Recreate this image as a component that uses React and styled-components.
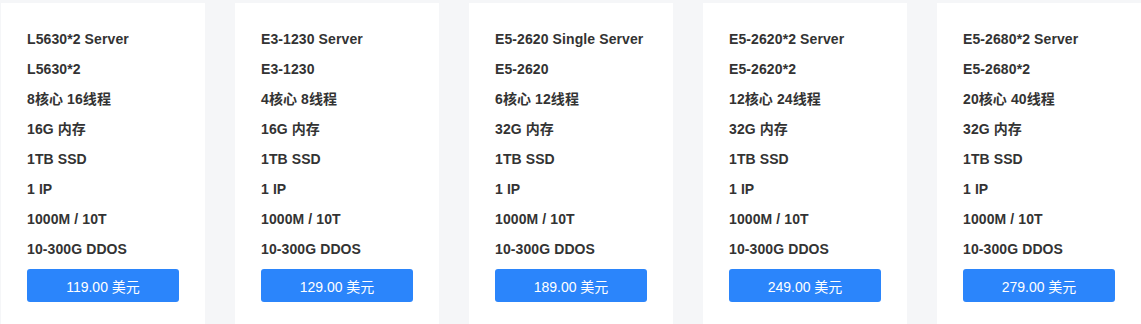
import styled, { createGlobalStyle } from "styled-components";

const GlobalStyle = createGlobalStyle`
    html, body {
        margin: 0;
        padding: 0;
        background: #f5f6f8;
        font-family: "Liberation Sans", Arial, "Noto Sans CJK SC", sans-serif;
    }
`

const plans = [
    { title: "L5630*2 Server", cpu: "L5630*2", cores: "8核心 16线程", ram: "16G 内存", price: "119.00" },
    { title: "E3-1230 Server", cpu: "E3-1230", cores: "4核心 8线程", ram: "16G 内存", price: "129.00" },
    { title: "E5-2620 Single Server", cpu: "E5-2620", cores: "6核心 12线程", ram: "32G 内存", price: "189.00" },
    { title: "E5-2620*2 Server", cpu: "E5-2620*2", cores: "12核心 24线程", ram: "32G 内存", price: "249.00" },
    { title: "E5-2680*2 Server", cpu: "E5-2680*2", cores: "20核心 40线程", ram: "32G 内存", price: "279.00" },
]

const App = () => {
    return (
        <>
            <GlobalStyle />
            <Wrapper>
                {plans.map((p) => (
                    <Card key={p.title}>
                        <Spec>{p.title}</Spec>
                        <Spec>{p.cpu}</Spec>
                        <Spec>{p.cores}</Spec>
                        <Spec>{p.ram}</Spec>
                        <Spec>1TB SSD</Spec>
                        <Spec>1 IP</Spec>
                        <Spec>1000M / 10T</Spec>
                        <Spec>10-300G DDOS</Spec>
                        <BuyButton>{p.price} 美元</BuyButton>
                    </Card>
                ))}
            </Wrapper>
        </>
    )
}

const Wrapper = styled.div`
    display: flex;
    gap: 30px;
    padding: 3px 0 0 1px;
    height: 321px;
    overflow: hidden;
`

const Card = styled.div`
    width: 204px;
    flex-shrink: 0;
    background: #fff;
    padding: 21px 26px 30px 26px;
    box-sizing: border-box;
    height: 340px;
    display: flex;
    flex-direction: column;
    align-items: stretch;
`

const Spec = styled.div`
    height: 30px;
    line-height: 30px;
    font-size: 14px;
    font-weight: bold;
    letter-spacing: 0.1px;
    color: #333;
    white-space: nowrap;
`

const BuyButton = styled.button`
    margin-top: 5px;
    height: 33px;
    border: none;
    border-radius: 3px;
    background: #2b85fb;
    color: #fff;
    font-family: "Liberation Sans", Arial, "Noto Sans CJK SC", sans-serif;
    font-size: 14px;
    padding: 0;
    cursor: pointer;
`

export default App
